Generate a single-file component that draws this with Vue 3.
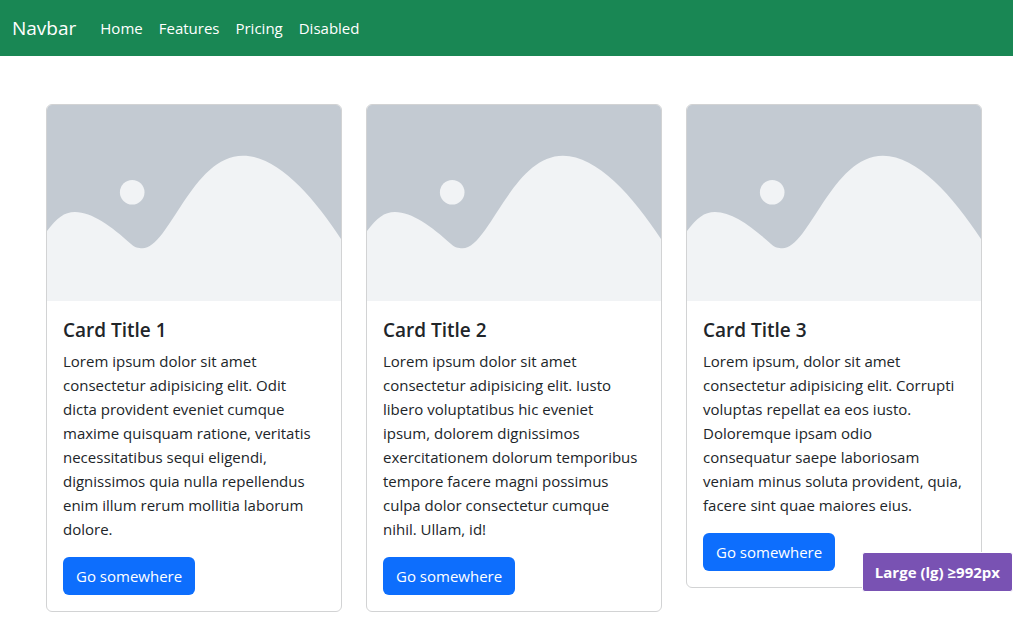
<script setup>
const links = ['Home', 'Features', 'Pricing', 'Disabled']

const cards = [
  {
    title: 'Card Title 1',
    text: `Lorem ipsum dolor sit amet
consectetur adipisicing elit. Odit
dicta provident eveniet cumque
maxime quisquam ratione, veritatis
necessitatibus sequi eligendi,
dignissimos quia nulla repellendus
enim illum rerum mollitia laborum
dolore.`,
  },
  {
    title: 'Card Title 2',
    text: `Lorem ipsum dolor sit amet
consectetur adipisicing elit. Iusto
libero voluptatibus hic eveniet
ipsum, dolorem dignissimos
exercitationem dolorum temporibus
tempore facere magni possimus
culpa dolor consectetur cumque
nihil. Ullam, id!`,
  },
  {
    title: 'Card Title 3',
    text: `Lorem ipsum, dolor sit amet
consectetur adipisicing elit. Corrupti
voluptas repellat ea eos iusto.
Doloremque ipsam odio
consequatur saepe laboriosam
veniam minus soluta provident, quia,
facere sint quae maiores eius.`,
  },
]
</script>

<template>
  <div class="page">
    <nav class="navbar">
      <a class="brand" href="#">Navbar</a>
      <ul class="links">
        <li v-for="link in links" :key="link"><a href="#">{{ link }}</a></li>
      </ul>
    </nav>

    <main class="cards">
      <article v-for="card in cards" :key="card.title" class="card">
        <svg class="picture" viewBox="0 0 294 196" role="img" aria-label="Placeholder landscape">
          <rect width="294" height="196" fill="#c3cad2" />
          <path
            d="M0 126 C10 113 17 107 28 107 C45 107 64 121 84 139 C88 142.5 91 143.3 95.5 143.3 C122 143.3 145 50.7 196 50.7 C230 50.7 266 91 294 134 V196 H0 Z"
            fill="#f1f3f5"
          />
          <circle cx="85.2" cy="87.2" r="12.3" fill="#f1f3f5" />
        </svg>
        <div class="body">
          <h5 class="title">{{ card.title }}</h5>
          <p class="text">{{ card.text }}</p>
          <a class="button" href="#">Go somewhere</a>
        </div>
      </article>
    </main>

    <div class="breakpoint">Large (lg) ≥992px</div>
  </div>
</template>

<style>
body {
  background: #fff;
}
</style>

<style scoped>
.page {
  color: #212529;
  font-family: "Open Sans", "Noto Sans", sans-serif;
  font-size: 15px;
  line-height: 24px;
}

a {
  text-decoration: none;
}

.navbar {
  display: flex;
  align-items: center;
  gap: 24px;
  min-height: 56px;
  padding: 0 12px;
  background: #198754;
}

.navbar a {
  color: #fff;
}

.navbar .brand {
  font-size: 19px;
}

.links {
  display: flex;
  gap: 16px;
  margin: 0;
  padding: 0;
  list-style: none;
}

.cards {
  display: grid;
  grid-template-columns: repeat(3, 1fr);
  align-items: start;
  gap: 24px;
  padding: 48px 31px 24px 46px;
}

.card {
  overflow: hidden;
  border: 1px solid #d2d3d4;
  border-radius: 6px;
  background: #fff;
}

.picture {
  display: block;
  width: 100%;
}

.body {
  padding: 16px;
}

.title {
  margin: 0 0 6px;
  font-size: 19px;
  font-weight: 600;
  line-height: 26px;
}

.text {
  margin: 0 0 16px;
  white-space: pre-line;
}

.button {
  display: inline-block;
  padding: 7px 13px;
  border-radius: 6px;
  background: #0d6efd;
  color: #fff;
  vertical-align: top;
}

.breakpoint {
  position: fixed;
  right: 0;
  bottom: 44px;
  padding: 7px 12px;
  border: 1px solid #fff;
  border-radius: 3px;
  background: #7952b3;
  color: #fff;
  font-weight: 700;
}
</style>
